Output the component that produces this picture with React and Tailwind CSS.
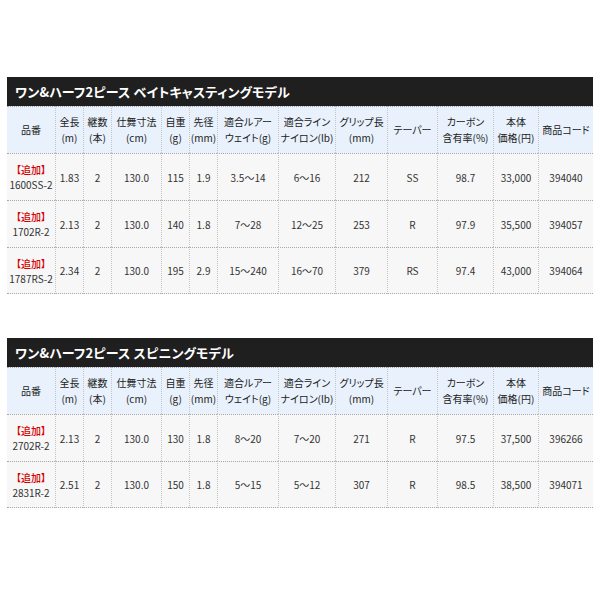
import React from "react";

const widths = [48, 28, 28, 50, 28, 28, 61, 57, 52, 50, 56, 45, 55];

const headers = [
  ["品番"],
  ["全長", "(m)"],
  ["継数", "(本)"],
  ["仕舞寸法", "(cm)"],
  ["自重", "(g)"],
  ["先径", "(mm)"],
  ["適合ルアー", "ウェイト(g)"],
  ["適合ライン", "ナイロン(lb)"],
  ["グリップ長", "(mm)"],
  ["テーパー"],
  ["カーボン", "含有率(%)"],
  ["本体", "価格(円)"],
  ["商品コード"],
];

const tables = [
  {
    title: "ワン&ハーフ2ピース ベイトキャスティングモデル",
    rows: [
      ["1600SS-2", "1.83", "2", "130.0", "115", "1.9", "3.5〜14", "6〜16", "212", "SS", "98.7", "33,000", "394040"],
      ["1702R-2", "2.13", "2", "130.0", "140", "1.8", "7〜28", "12〜25", "253", "R", "97.9", "35,500", "394057"],
      ["1787RS-2", "2.34", "2", "130.0", "195", "2.9", "15〜240", "16〜70", "379", "RS", "97.4", "43,000", "394064"],
    ],
  },
  {
    title: "ワン&ハーフ2ピース スピニングモデル",
    rows: [
      ["2702R-2", "2.13", "2", "130.0", "130", "1.8", "8〜20", "7〜20", "271", "R", "97.5", "37,500", "396266"],
      ["2831R-2", "2.51", "2", "130.0", "150", "1.8", "5〜15", "5〜12", "307", "R", "98.5", "38,500", "394071"],
    ],
  },
];

function SpecTable({ title, rows }) {
  return (
    <div className="w-[586px]">
      <div className="h-[29px] bg-[#1f1f1f] text-white font-bold text-[13px] pl-[8px] flex items-center tracking-[0.2px]">
        {title}
      </div>
      <table className="table-fixed w-[586px] border-separate border-spacing-0">
        <colgroup>
          {widths.map((w, i) => (
            <col key={i} style={{ width: w }} />
          ))}
        </colgroup>
        <thead>
          <tr>
            {headers.map((h, i) => (
              <th
                key={i}
                className={
                  "h-[47px] p-0 bg-[#e8f1fc] text-[#222] font-normal text-[10px] leading-[16px] text-center align-middle border-t border-dotted border-t-[#a8a8a8] " +
                  (i > 0 ? "border-l border-l-[#c4c4c4] border-l-solid" : "")
                }
              >
                {h.map((line, j) => (
                  <div key={j} className="whitespace-nowrap">
                    {line}
                  </div>
                ))}
              </th>
            ))}
          </tr>
        </thead>
        <tbody>
          {rows.map((r, ri) => (
            <tr key={ri}>
              {r.map((c, i) => (
                <td
                  key={i}
                  className={
                    "h-[47px] p-0 bg-[#f7f7f7] text-[#333] text-[10px] leading-[15px] text-center align-middle border-t border-dotted border-t-[#a8a8a8] " +
                    (i > 0 ? "border-l border-l-[#c4c4c4] border-l-solid " : "") +
                    (ri === rows.length - 1 ? "border-b border-b-[#a8a8a8] " : "")
                  }
                >
                  {i === 0 ? (
                    <>
                      <div className="text-[#d40000] font-medium whitespace-nowrap">【追加】</div>
                      <div className="whitespace-nowrap">{c}</div>
                    </>
                  ) : (
                    <span className="whitespace-nowrap">{c}</span>
                  )}
                </td>
              ))}
            </tr>
          ))}
        </tbody>
      </table>
    </div>
  );
}

export default function App() {
  return (
    <div
      className="w-[600px] h-[600px] bg-white pt-[77px] flex flex-col items-center gap-[44px] [font-feature-settings:'palt'] font-['Noto_Sans_CJK_JP',sans-serif]"
    >
      {tables.map((t, i) => (
        <SpecTable key={i} title={t.title} rows={t.rows} />
      ))}
    </div>
  );
}
